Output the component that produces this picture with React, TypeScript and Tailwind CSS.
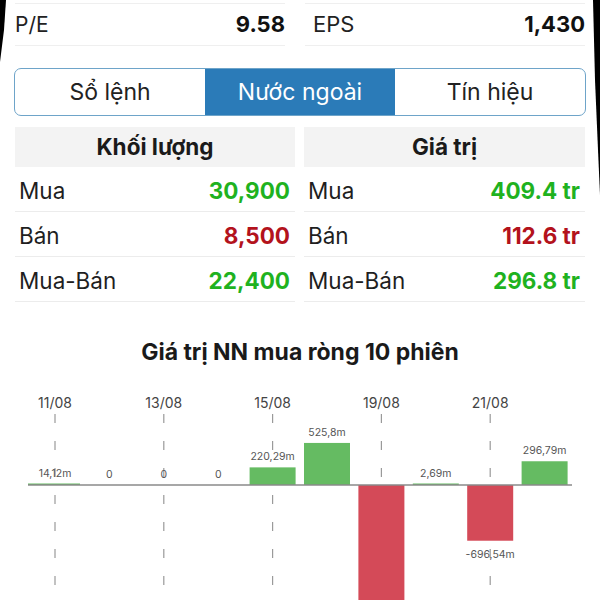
import React from "react";

const font = { fontFamily: "Inter, 'Noto Sans', Roboto, sans-serif" };

type Row = { label: string; value: string; color: string };

const GREEN = "text-[#1fb21f]";
const RED = "text-[#b3121c]";

function Table({ title, rows }: { title: string; rows: Row[] }) {
  return (
    <div className="flex flex-col">
      <div className="h-[40px] bg-[#f3f3f3] flex items-center justify-center text-[22.5px] font-bold text-[#1a1a1a]">
        {title}
      </div>
      {rows.map((r) => (
        <div
          key={r.label}
          className="h-[45px] pt-[4px] flex items-center justify-between border-b border-[#ececec] pl-[4px] pr-[5px]"
        >
          <span className="text-[22.5px] text-[#1f1f1f]">{r.label}</span>
          <span className={`text-[22.5px] font-bold ${r.color}`}>{r.value}</span>
        </div>
      ))}
    </div>
  );
}

function Chart() {
  const base = 99;
  const scale = 0.08;
  const slotW = 54.4;
  const x0 = 55;
  const bars: { v: number; label: string | null }[] = [
    { v: 14.12, label: "14,12m" },
    { v: 0, label: "0" },
    { v: 0, label: "0" },
    { v: 0, label: "0" },
    { v: 220.29, label: "220,29m" },
    { v: 525.8, label: "525,8m" },
    { v: -1850, label: null },
    { v: 2.69, label: "2,69m" },
    { v: -696.54, label: "-696,54m" },
    { v: 296.79, label: "296,79m" },
  ];
  const dates: [number, string][] = [
    [0, "11/08"],
    [2, "13/08"],
    [4, "15/08"],
    [6, "19/08"],
    [8, "21/08"],
  ];
  return (
    <svg width="600" height="215" viewBox="0 0 600 215" className="block">
      {dates.map(([i, d]) => {
        const cx = x0 + i * slotW;
        return (
          <g key={d}>
            <text x={cx} y={22} textAnchor="middle" fontSize="14" fill="#444" style={font}>
              {d}
            </text>
            <line
              x1={cx}
              x2={cx}
              y1={28}
              y2={215}
              stroke="#9a9a9a"
              strokeWidth="1.2"
              strokeDasharray="9 18"
            />
          </g>
        );
      })}
      {bars.map((b, i) => {
        const cx = x0 + i * slotW;
        const h = Math.max(Math.abs(b.v) * scale, b.v !== 0 ? 1.5 : 0);
        const w = i === 0 ? 52 : 46;
        const bx = i === 0 ? 28 : cx - w / 2;
        const pos = b.v >= 0;
        return (
          <g key={i}>
            {b.v !== 0 && (
              <rect
                x={bx}
                y={pos ? base - h : base}
                width={w}
                height={h}
                fill={pos ? "#65bb62" : "#d44a58"}
              />
            )}
            {b.label && (
              <text
                x={cx}
                y={pos ? base - h - 7 : base + h + 17}
                textAnchor="middle"
                fontSize="10.5"
                fill="#555"
                style={font}
              >
                {b.label}
              </text>
            )}
          </g>
        );
      })}
      <line x1={28} x2={572} y1={base} y2={base} stroke="#8a8a8a" strokeWidth="1.6" />
    </svg>
  );
}

export default function App() {
  return (
    <div className="relative w-[600px] h-[600px] overflow-hidden bg-white" style={font}>
      <div className="pt-[3px] flex px-[15px] gap-[20px]">
        <div className="w-[270px] h-[43px] border-y border-[#efefef] flex items-center justify-between">
          <span className="text-[21px] text-[#222]">P/E</span>
          <span className="text-[22px] font-bold text-[#111]">9.58</span>
        </div>
        <div className="w-[280px] h-[43px] border-y border-[#efefef] flex items-center justify-between pl-[8px]">
          <span className="text-[22px] text-[#222]">EPS</span>
          <span className="text-[22px] font-bold text-[#111]">1,430</span>
        </div>
      </div>

      <div className="mt-[22px] mx-[14px] w-[572px] h-[48px] border-[1.5px] border-[#6ea4c9] rounded-[7px] overflow-hidden grid grid-cols-3">
        <div className="flex items-center justify-center text-[23px] text-[#222]">Sổ lệnh</div>
        <div className="flex items-center justify-center text-[23px] text-white bg-[#2b7bb8]">Nước ngoài</div>
        <div className="flex items-center justify-center text-[23px] text-[#222]">Tín hiệu</div>
      </div>

      <div className="mt-[11px] mx-[15px] flex gap-[9px]">
        <div className="w-[280px]">
          <Table
            title="Khối lượng"
            rows={[
              { label: "Mua", value: "30,900", color: GREEN },
              { label: "Bán", value: "8,500", color: RED },
              { label: "Mua-Bán", value: "22,400", color: GREEN },
            ]}
          />
        </div>
        <div className="w-[281px]">
          <Table
            title="Giá trị"
            rows={[
              { label: "Mua", value: "409.4 tr", color: GREEN },
              { label: "Bán", value: "112.6 tr", color: RED },
              { label: "Mua-Bán", value: "296.8 tr", color: GREEN },
            ]}
          />
        </div>
      </div>

      <div className="mt-[33px] text-center text-[23px] font-bold text-[#1a1a1a]">
        Giá trị NN mua ròng 10 phiên
      </div>

      <div className="mt-[16px]">
        <Chart />
      </div>

      <svg className="absolute left-0 top-0" width="600" height="200" viewBox="0 0 600 200">
        <polygon points="0,0 6,0 4,30 0,62" fill="#000" />
        <polygon points="593,0 600,0 600,195 598,150 595,80" fill="#000" />
      </svg>
    </div>
  );
}
